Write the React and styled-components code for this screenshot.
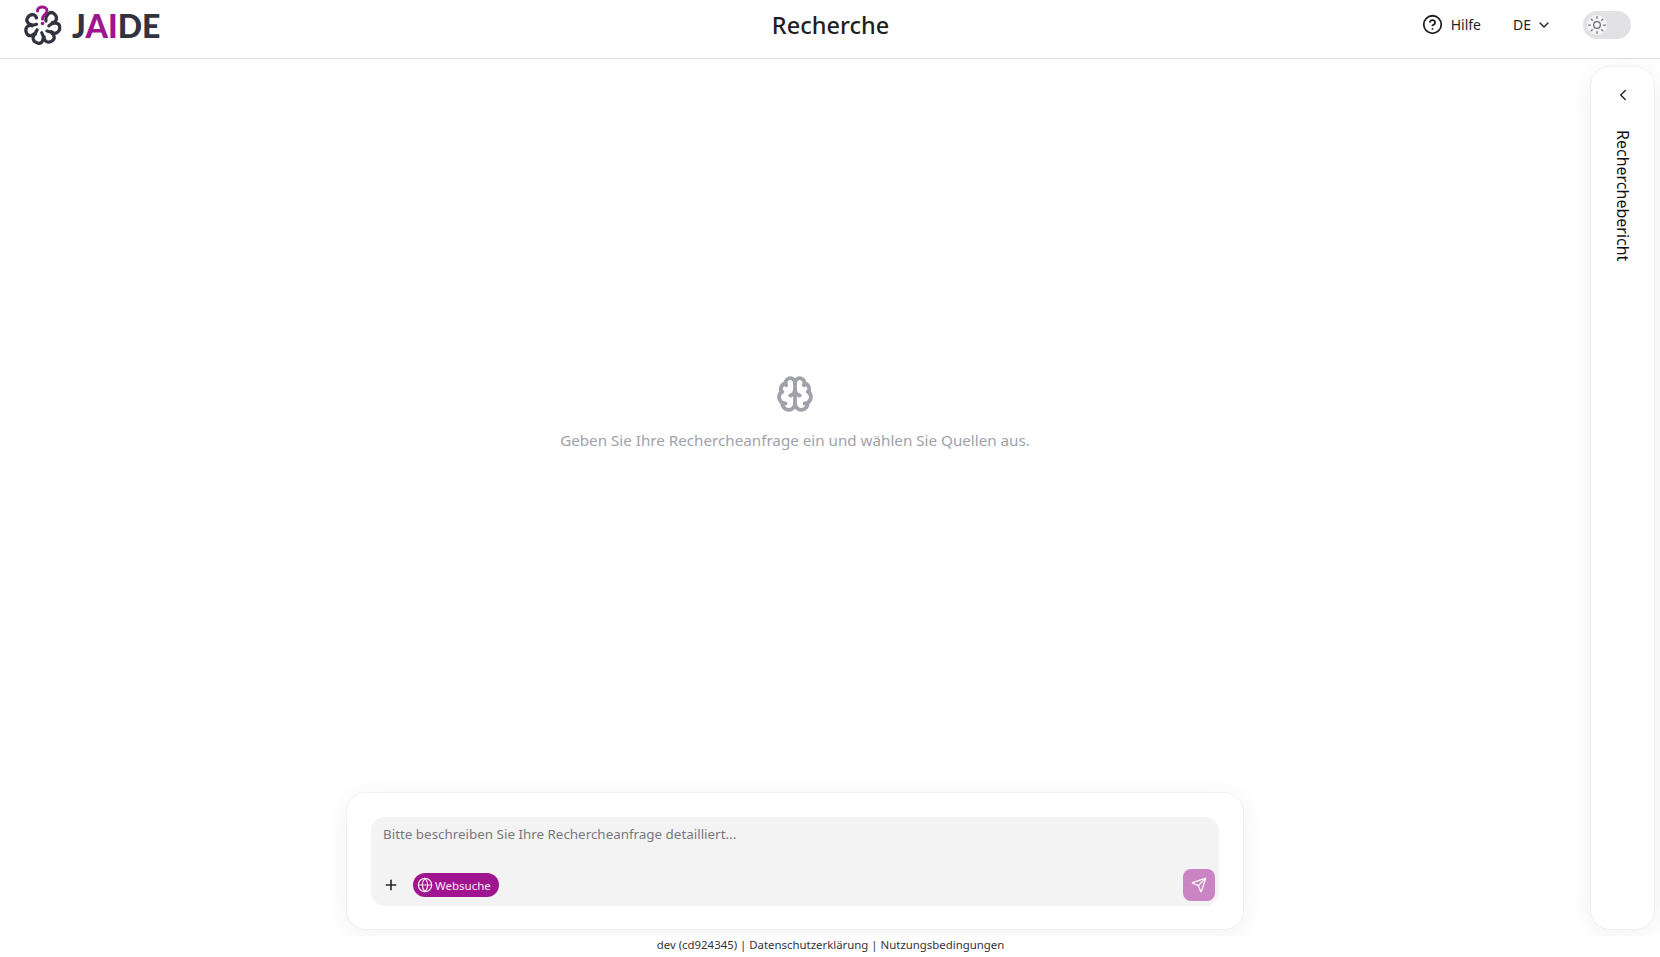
import styled, { createGlobalStyle } from "styled-components";
import { Brain, ChevronDown, ChevronLeft, CircleHelp, Globe, Plus, Send, Sun } from "lucide-react";

const GlobalStyle = createGlobalStyle`
  html, body {
    margin: 0;
    padding: 0;
    height: 100%;
    background: #fff;
    font-family: "Noto Sans", "Open Sans", sans-serif;
    color: #1f1f23;
  }
  #root { height: 100%; }
  * { box-sizing: border-box; }
`;

const Page = styled.div`
  height: 957px;
  display: flex;
  flex-direction: column;
  overflow: hidden;
`;

const Header = styled.header`
  height: 59px;
  flex: none;
  display: grid;
  grid-template-columns: 1fr auto 1fr;
  align-items: center;
  padding: 0 29px 9px;
  border-bottom: 1px solid #dedede;
`;

const LogoBox = styled.div`
  display: flex;
  align-items: center;
  gap: 9px;
  margin-left: -7px;
  padding-top: 2px;
`;

const LogoText = styled.div`
  font-family: "Lato", sans-serif;
  font-weight: 900;
  font-size: 32px;
  color: #33333f;
  line-height: 1;
  span { color: #a0158f; }
`;

const Title = styled.h1`
  margin: 0 0 0 1px;
  font-size: 23.5px;
  font-weight: 500;
  color: #1f1f23;
`;

const HeaderRight = styled.div`
  display: flex;
  justify-content: flex-end;
  align-items: center;
`;

const HelpLink = styled.div`
  display: flex;
  align-items: center;
  gap: 8px;
  font-size: 14px;
  margin-right: 32px;
`;

const LangPicker = styled.div`
  display: flex;
  align-items: center;
  gap: 5px;
  font-size: 14px;
  margin-right: 31px;
`;

const Toggle = styled.div`
  width: 48px;
  height: 28px;
  border-radius: 14px;
  background: #e2e2e4;
  display: flex;
  align-items: center;
  padding-left: 4px;
`;

const Knob = styled.div`
  width: 20px;
  height: 20px;
  border-radius: 50%;
  background: #f6f6f6;
  display: flex;
  align-items: center;
  justify-content: center;
  color: #6a6a70;
`;

const Body = styled.div`
  flex: 1;
  min-height: 0;
  display: flex;
  overflow: hidden;
`;

const Main = styled.main`
  flex: 1;
  min-width: 0;
  display: flex;
  flex-direction: column;
  align-items: center;
`;

const Empty = styled.div`
  flex: 1;
  display: flex;
  flex-direction: column;
  align-items: center;
  justify-content: center;
  gap: 17px;
  color: #a1a1aa;
  font-size: 15.2px;
  padding-bottom: 27px;
`;

const Composer = styled.div`
  width: 898px;
  height: 138px;
  flex: none;
  margin-bottom: 6px;
  padding: 24px;
  background: #fff;
  border: 1px solid #f0f0f0;
  border-radius: 20px;
  box-shadow: 0 4px 24px rgba(0, 0, 0, 0.06);
`;

const InputBox = styled.div`
  position: relative;
  height: 89px;
  background: #f3f3f4;
  border-radius: 14px;
  padding: 8px 12px;
  font-size: 13.4px;
  color: #77777f;
`;

const Tools = styled.div`
  position: absolute;
  left: 12px;
  bottom: 9px;
  display: flex;
  align-items: center;
  gap: 14px;
  color: #27272a;
`;

const WebChip = styled.div`
  height: 24px;
  border-radius: 12px;
  background: #a0158f;
  color: #f9e8f6;
  font-size: 11.5px;
  display: flex;
  align-items: center;
  gap: 2px;
  padding: 0 8px 0 4px;
`;

const SendButton = styled.div`
  position: absolute;
  right: 4px;
  bottom: 5px;
  width: 32px;
  height: 32px;
  border-radius: 8px;
  background: #cb84c3;
  color: #fff;
  display: flex;
  align-items: center;
  justify-content: center;
`;

const SidePanel = styled.aside`
  width: 65px;
  flex: none;
  margin: 7px 5px 6px 0;
  background: #fff;
  border: 1px solid #f0f0f0;
  border-radius: 20px;
  box-shadow: 0 4px 24px rgba(0, 0, 0, 0.06);
  display: flex;
  flex-direction: column;
  align-items: center;
  padding-top: 19px;
  gap: 26px;
  color: #27272a;
`;

const PanelLabel = styled.div`
  writing-mode: vertical-rl;
  font-size: 16px;
  color: #111114;
  margin-left: 1px;
`;

const Footer = styled.footer`
  height: 21px;
  flex: none;
  display: flex;
  align-items: center;
  justify-content: center;
  padding: 0 0 5px 1px;
  font-size: 11.4px;
  color: #33333a;
`;

function LogoMark() {
  const petals = [1, 2, 3, 4, 5, 6];
  return (
    <svg width="41" height="41" viewBox="0 0 41 41" fill="none" strokeLinecap="round">
      {petals.map((k) => (
        <path
          key={k}
          d="M18.5 15.5 C13 12 13 5.5 17.5 4.5 C23 3.2 26 8 23.5 11.5"
          transform={`rotate(${k * 51.4} 20.5 21.5)`}
          stroke="#33333f"
          strokeWidth="3.2"
        />
      ))}
      <path d="M15.5 6 C15.5 0.8 25 0.8 25 6 C25 9.5 20.5 9.5 20.5 14" stroke="#a0158f" strokeWidth="3" />
      <circle cx="20.5" cy="18.5" r="1.8" fill="#a0158f" />
    </svg>
  );
}

export default function App() {
  return (
    <>
      <GlobalStyle />
      <Page>
        <Header>
          <LogoBox>
            <LogoMark />
            <LogoText>J<span>AI</span>DE</LogoText>
          </LogoBox>
          <Title>Recherche</Title>
          <HeaderRight>
            <HelpLink><CircleHelp size={21} strokeWidth={2} color="#1f1f23" />Hilfe</HelpLink>
            <LangPicker>DE<ChevronDown size={16} /></LangPicker>
            <Toggle><Knob><Sun size={20} strokeWidth={1.5} /></Knob></Toggle>
          </HeaderRight>
        </Header>
        <Body>
          <Main>
            <Empty>
              <Brain size={38} strokeWidth={2.4} color="#a1a1aa" />
              Geben Sie Ihre Rechercheanfrage ein und wählen Sie Quellen aus.
            </Empty>
            <Composer>
              <InputBox>
                Bitte beschreiben Sie Ihre Rechercheanfrage detailliert...
                <Tools>
                  <Plus size={16} strokeWidth={2.4} />
                  <WebChip><Globe size={16} strokeWidth={1.8} />Websuche</WebChip>
                </Tools>
                <SendButton><Send size={16} strokeWidth={1.8} /></SendButton>
              </InputBox>
            </Composer>
          </Main>
          <SidePanel>
            <ChevronLeft size={18} strokeWidth={2} />
            <PanelLabel>Recherchebericht</PanelLabel>
          </SidePanel>
        </Body>
        <Footer>dev (cd924345) | Datenschutzerklärung | Nutzungsbedingungen</Footer>
      </Page>
    </>
  );
}
